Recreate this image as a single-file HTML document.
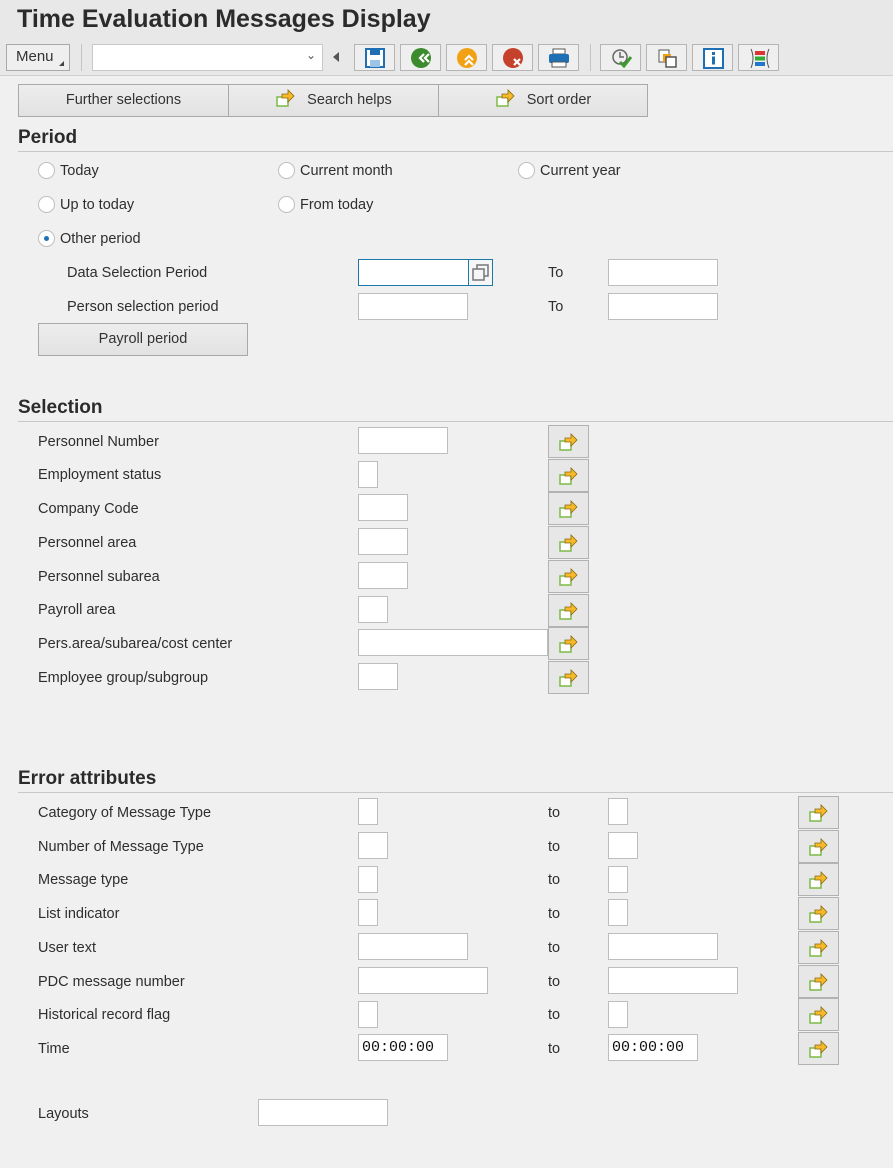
<!DOCTYPE html>
<html><head><meta charset="utf-8">
<style>
*{box-sizing:border-box;margin:0;padding:0}
body{width:893px;height:1168px;background:#f0f0f0;font-family:"Liberation Sans",Arial,sans-serif;color:#2e2e2e;font-size:14.5px;position:relative;overflow:hidden}
.a{position:absolute}
.hdr{left:0;top:0;width:893px;height:76px;background:#e8e8e8;border-bottom:1px solid #cfcfcf}
.title{left:17px;top:5px;font-size:25px;font-weight:bold;color:#2b2b2b}
.tb{top:44px;height:27px;border:1px solid #b5b5b5;background:#efefef;width:41px}
.inp{background:#fff;border:1px solid #bdbdbd;height:27px}
.btn{background:linear-gradient(#ededed,#e2e2e2);border:1px solid #a9a9a9;text-align:center;line-height:30px;color:#333}
.sec{left:18px;font-size:19px;font-weight:bold;color:#2b2b2b}
.line{left:18px;width:875px;height:1px;background:#c8c8c8}
.lbl{line-height:18px}
.rad{width:17px;height:17px;border-radius:50%;border:1.5px solid #bfbfbf;background:#fff}
.rb{width:41px;height:33px;border:1px solid #b2b2b2;background:#e7e7e7}
.rb svg{position:absolute;left:9px;top:6px}
.mono{font-family:"Liberation Mono",monospace;font-size:15px;padding-left:3px;line-height:25px;color:#111}
</style></head><body>
<div class="a hdr"></div>
<div class="a title">Time Evaluation Messages Display</div>
<div class="a btn" style="left:6px;top:44px;width:64px;height:27px;line-height:24px;background:#efefef;font-size:15px;text-align:left;padding-left:9px">Menu<span style="position:absolute;right:5px;bottom:4px;width:0;height:0;border-left:5px solid transparent;border-bottom:5px solid #444"></span></div>
<div class="a" style="left:81px;top:44px;width:1px;height:27px;background:#c4c4c4"></div>
<div class="a inp" style="left:92px;top:44px;width:231px;height:27px;border-color:#c8c8c8"><span style="position:absolute;right:6px;top:3px;font-size:12px;color:#555">&#8964;</span></div>
<div class="a" style="left:333px;top:52px;width:0;height:0;border-top:5px solid transparent;border-bottom:5px solid transparent;border-right:6px solid #555"></div>
<div class="a tb" style="left:354px"><svg class="a" style="left:10px;top:3px" width="20" height="20"><rect x="1" y="1" width="18" height="18" fill="#fff" stroke="#1f6fb5" stroke-width="2"/><rect x="5" y="1" width="10" height="6" fill="#1f6fb5"/><rect x="5" y="12" width="10" height="7" fill="#9cc4e8"/></svg></div>
<div class="a tb" style="left:400px"><svg class="a" style="left:10px;top:3px" width="21" height="21"><circle cx="10" cy="10" r="10" fill="#3d8b2f"/><path d="M13 6l-4 4 4 4M18 6l-4 4 4 4" stroke="#fff" stroke-width="2.2" fill="none"/></svg></div>
<div class="a tb" style="left:446px"><svg class="a" style="left:10px;top:3px" width="21" height="21"><circle cx="10" cy="10" r="10" fill="#f2a114"/><path d="M8 12l4-4 4 4M8 17l4-4 4 4" stroke="#fff" stroke-width="2.2" fill="none"/></svg></div>
<div class="a tb" style="left:492px"><svg class="a" style="left:10px;top:3px" width="21" height="21"><circle cx="10" cy="10" r="10" fill="#c6412b"/><path d="M11 11l6 6M17 11l-6 6" stroke="#fff" stroke-width="2.2"/></svg></div>
<div class="a tb" style="left:538px"><svg class="a" style="left:9px;top:3px" width="22" height="20"><rect x="5" y="1" width="12" height="5" fill="#fff" stroke="#555"/><rect x="1" y="6" width="20" height="9" rx="2" fill="#1f6fb5"/><rect x="4" y="14" width="14" height="5" fill="#fff" stroke="#555"/></svg></div>
<div class="a" style="left:590px;top:44px;width:1px;height:27px;background:#c4c4c4"></div>
<div class="a tb" style="left:600px"><svg class="a" style="left:10px;top:3px" width="22" height="21"><circle cx="9" cy="9" r="7" fill="none" stroke="#666" stroke-width="1.5"/><path d="M9 4v5h4" stroke="#666" stroke-width="1.5" fill="none"/><path d="M9 14l4 4 7-9" stroke="#3d9b2f" stroke-width="3" fill="none"/></svg></div>
<div class="a tb" style="left:646px"><svg class="a" style="left:10px;top:3px" width="22" height="21"><rect x="2" y="2" width="10" height="12" fill="#fff" stroke="#555"/><rect x="6" y="6" width="8" height="8" fill="#f2a114"/><rect x="9" y="9" width="10" height="10" fill="#fff" stroke="#555" stroke-width="1.5"/></svg></div>
<div class="a tb" style="left:692px"><svg class="a" style="left:10px;top:3px" width="21" height="21"><rect x="1" y="1" width="19" height="19" fill="#fff" stroke="#1f6fb5" stroke-width="2"/><rect x="9" y="4" width="3" height="3" fill="#1f6fb5"/><rect x="9" y="8.5" width="3" height="8" fill="#1f6fb5"/></svg></div>
<div class="a tb" style="left:738px"><svg class="a" style="left:10px;top:3px" width="22" height="21"><path d="M2 1q4 9 0 19M20 1q-4 9 0 19" stroke="#555" fill="none"/><rect x="6" y="3" width="10" height="4" fill="#d33"/><rect x="6" y="8.5" width="10" height="4" fill="#3a3"/><rect x="6" y="14" width="10" height="4" fill="#27c"/></svg></div>

<div class="a btn" style="left:18px;top:84px;width:211px;height:33px">Further selections</div>
<div class="a btn" style="left:228px;top:84px;width:211px;height:33px"><svg style="vertical-align:-4px;margin-right:12px" width="20" height="20"><rect x="2" y="9" width="11" height="9" fill="#fff" stroke="#7dba46" stroke-width="1.5"/><path d="M7 6h6V2l6 6-6 6v-4H7z" fill="#f5b929" stroke="#8b6a10" stroke-width="0.8"/></svg>Search helps</div>
<div class="a btn" style="left:438px;top:84px;width:210px;height:33px"><svg style="vertical-align:-4px;margin-right:12px" width="20" height="20"><rect x="2" y="9" width="11" height="9" fill="#fff" stroke="#7dba46" stroke-width="1.5"/><path d="M7 6h6V2l6 6-6 6v-4H7z" fill="#f5b929" stroke="#8b6a10" stroke-width="0.8"/></svg>Sort order</div>

<div class="a sec" style="top:127px">Period</div>
<div class="a line" style="top:151px"></div>
<div class="a rad" style="left:38px;top:162px"></div><div class="a lbl" style="left:60px;top:162px">Today</div>
<div class="a rad" style="left:278px;top:162px"></div><div class="a lbl" style="left:300px;top:162px">Current month</div>
<div class="a rad" style="left:518px;top:162px"></div><div class="a lbl" style="left:540px;top:162px">Current year</div>
<div class="a rad" style="left:38px;top:196px"></div><div class="a lbl" style="left:60px;top:196px">Up to today</div>
<div class="a rad" style="left:278px;top:196px"></div><div class="a lbl" style="left:300px;top:196px">From today</div>
<div class="a rad" style="left:38px;top:230px"><div class="a" style="left:4.5px;top:4.5px;width:5px;height:5px;border-radius:50%;background:#1f72b8"></div></div><div class="a lbl" style="left:60px;top:230px">Other period</div>
<div class="a lbl" style="left:67px;top:264px">Data Selection Period</div>
<div class="a inp" style="left:358px;top:259px;width:111px;border-color:#1b78a8"></div>
<div class="a" style="left:468px;top:259px;width:25px;height:27px;border:1px solid #1b78a8;background:#f6f6f6"><svg class="a" style="left:3px;top:4px" width="18" height="18"><rect x="1" y="5" width="11" height="11" fill="none" stroke="#777" stroke-width="1.5"/><path d="M5 5V1h11v11h-4" fill="none" stroke="#777" stroke-width="1.5"/></svg></div>
<div class="a lbl" style="left:548px;top:264px">To</div>
<div class="a inp" style="left:608px;top:259px;width:110px"></div>
<div class="a lbl" style="left:67px;top:298px">Person selection period</div>
<div class="a inp" style="left:358px;top:293px;width:110px"></div>
<div class="a lbl" style="left:548px;top:298px">To</div>
<div class="a inp" style="left:608px;top:293px;width:110px"></div>
<div class="a btn" style="left:38px;top:323px;width:210px;height:33px">Payroll period</div>

<div class="a sec" style="top:397px">Selection</div>
<div class="a line" style="top:421px"></div>

<div class="a lbl" style="left:38px;top:433px">Personnel Number</div><div class="a inp" style="left:358px;top:427px;width:90px"></div>
<div class="a lbl" style="left:38px;top:466px">Employment status</div><div class="a inp" style="left:358px;top:461px;width:20px"></div>
<div class="a lbl" style="left:38px;top:500px">Company Code</div><div class="a inp" style="left:358px;top:494px;width:50px"></div>
<div class="a lbl" style="left:38px;top:534px">Personnel area</div><div class="a inp" style="left:358px;top:528px;width:50px"></div>
<div class="a lbl" style="left:38px;top:568px">Personnel subarea</div><div class="a inp" style="left:358px;top:562px;width:50px"></div>
<div class="a lbl" style="left:38px;top:601px">Payroll area</div><div class="a inp" style="left:358px;top:596px;width:30px"></div>
<div class="a lbl" style="left:38px;top:635px">Pers.area/subarea/cost center</div><div class="a inp" style="left:358px;top:629px;width:190px"></div>
<div class="a lbl" style="left:38px;top:669px">Employee group/subgroup</div><div class="a inp" style="left:358px;top:663px;width:40px"></div>

<div class="a rb" style="left:548px;top:425px"><svg width="20" height="20"><rect x="2" y="9" width="11" height="9" fill="#fff" stroke="#7dba46" stroke-width="1.5"/><path d="M7 6h6V2l6 6-6 6v-4H7z" fill="#f5b929" stroke="#8b6a10" stroke-width="0.8"/></svg></div>
<div class="a rb" style="left:548px;top:459px"><svg width="20" height="20"><rect x="2" y="9" width="11" height="9" fill="#fff" stroke="#7dba46" stroke-width="1.5"/><path d="M7 6h6V2l6 6-6 6v-4H7z" fill="#f5b929" stroke="#8b6a10" stroke-width="0.8"/></svg></div>
<div class="a rb" style="left:548px;top:492px"><svg width="20" height="20"><rect x="2" y="9" width="11" height="9" fill="#fff" stroke="#7dba46" stroke-width="1.5"/><path d="M7 6h6V2l6 6-6 6v-4H7z" fill="#f5b929" stroke="#8b6a10" stroke-width="0.8"/></svg></div>
<div class="a rb" style="left:548px;top:526px"><svg width="20" height="20"><rect x="2" y="9" width="11" height="9" fill="#fff" stroke="#7dba46" stroke-width="1.5"/><path d="M7 6h6V2l6 6-6 6v-4H7z" fill="#f5b929" stroke="#8b6a10" stroke-width="0.8"/></svg></div>
<div class="a rb" style="left:548px;top:560px"><svg width="20" height="20"><rect x="2" y="9" width="11" height="9" fill="#fff" stroke="#7dba46" stroke-width="1.5"/><path d="M7 6h6V2l6 6-6 6v-4H7z" fill="#f5b929" stroke="#8b6a10" stroke-width="0.8"/></svg></div>
<div class="a rb" style="left:548px;top:594px"><svg width="20" height="20"><rect x="2" y="9" width="11" height="9" fill="#fff" stroke="#7dba46" stroke-width="1.5"/><path d="M7 6h6V2l6 6-6 6v-4H7z" fill="#f5b929" stroke="#8b6a10" stroke-width="0.8"/></svg></div>
<div class="a rb" style="left:548px;top:627px"><svg width="20" height="20"><rect x="2" y="9" width="11" height="9" fill="#fff" stroke="#7dba46" stroke-width="1.5"/><path d="M7 6h6V2l6 6-6 6v-4H7z" fill="#f5b929" stroke="#8b6a10" stroke-width="0.8"/></svg></div>
<div class="a rb" style="left:548px;top:661px"><svg width="20" height="20"><rect x="2" y="9" width="11" height="9" fill="#fff" stroke="#7dba46" stroke-width="1.5"/><path d="M7 6h6V2l6 6-6 6v-4H7z" fill="#f5b929" stroke="#8b6a10" stroke-width="0.8"/></svg></div>

<div class="a sec" style="top:768px">Error attributes</div>
<div class="a line" style="top:792px"></div>

<div class="a lbl" style="left:38px;top:804px">Category of Message Type</div><div class="a inp" style="left:358px;top:798px;width:20px"></div><div class="a lbl" style="left:548px;top:804px">to</div><div class="a inp" style="left:608px;top:798px;width:20px"></div>
<div class="a lbl" style="left:38px;top:838px">Number of Message Type</div><div class="a inp" style="left:358px;top:832px;width:30px"></div><div class="a lbl" style="left:548px;top:838px">to</div><div class="a inp" style="left:608px;top:832px;width:30px"></div>
<div class="a lbl" style="left:38px;top:871px">Message type</div><div class="a inp" style="left:358px;top:866px;width:20px"></div><div class="a lbl" style="left:548px;top:871px">to</div><div class="a inp" style="left:608px;top:866px;width:20px"></div>
<div class="a lbl" style="left:38px;top:905px">List indicator</div><div class="a inp" style="left:358px;top:899px;width:20px"></div><div class="a lbl" style="left:548px;top:905px">to</div><div class="a inp" style="left:608px;top:899px;width:20px"></div>
<div class="a lbl" style="left:38px;top:939px">User text</div><div class="a inp" style="left:358px;top:933px;width:110px"></div><div class="a lbl" style="left:548px;top:939px">to</div><div class="a inp" style="left:608px;top:933px;width:110px"></div>
<div class="a lbl" style="left:38px;top:973px">PDC message number</div><div class="a inp" style="left:358px;top:967px;width:130px"></div><div class="a lbl" style="left:548px;top:973px">to</div><div class="a inp" style="left:608px;top:967px;width:130px"></div>
<div class="a lbl" style="left:38px;top:1006px">Historical record flag</div><div class="a inp" style="left:358px;top:1001px;width:20px"></div><div class="a lbl" style="left:548px;top:1006px">to</div><div class="a inp" style="left:608px;top:1001px;width:20px"></div>
<div class="a lbl" style="left:38px;top:1040px">Time</div><div class="a inp mono" style="left:358px;top:1034px;width:90px">00:00:00</div><div class="a lbl" style="left:548px;top:1040px">to</div><div class="a inp mono" style="left:608px;top:1034px;width:90px">00:00:00</div>

<div class="a rb" style="left:798px;top:796px"><svg width="20" height="20"><rect x="2" y="9" width="11" height="9" fill="#fff" stroke="#7dba46" stroke-width="1.5"/><path d="M7 6h6V2l6 6-6 6v-4H7z" fill="#f5b929" stroke="#8b6a10" stroke-width="0.8"/></svg></div>
<div class="a rb" style="left:798px;top:830px"><svg width="20" height="20"><rect x="2" y="9" width="11" height="9" fill="#fff" stroke="#7dba46" stroke-width="1.5"/><path d="M7 6h6V2l6 6-6 6v-4H7z" fill="#f5b929" stroke="#8b6a10" stroke-width="0.8"/></svg></div>
<div class="a rb" style="left:798px;top:863px"><svg width="20" height="20"><rect x="2" y="9" width="11" height="9" fill="#fff" stroke="#7dba46" stroke-width="1.5"/><path d="M7 6h6V2l6 6-6 6v-4H7z" fill="#f5b929" stroke="#8b6a10" stroke-width="0.8"/></svg></div>
<div class="a rb" style="left:798px;top:897px"><svg width="20" height="20"><rect x="2" y="9" width="11" height="9" fill="#fff" stroke="#7dba46" stroke-width="1.5"/><path d="M7 6h6V2l6 6-6 6v-4H7z" fill="#f5b929" stroke="#8b6a10" stroke-width="0.8"/></svg></div>
<div class="a rb" style="left:798px;top:931px"><svg width="20" height="20"><rect x="2" y="9" width="11" height="9" fill="#fff" stroke="#7dba46" stroke-width="1.5"/><path d="M7 6h6V2l6 6-6 6v-4H7z" fill="#f5b929" stroke="#8b6a10" stroke-width="0.8"/></svg></div>
<div class="a rb" style="left:798px;top:965px"><svg width="20" height="20"><rect x="2" y="9" width="11" height="9" fill="#fff" stroke="#7dba46" stroke-width="1.5"/><path d="M7 6h6V2l6 6-6 6v-4H7z" fill="#f5b929" stroke="#8b6a10" stroke-width="0.8"/></svg></div>
<div class="a rb" style="left:798px;top:998px"><svg width="20" height="20"><rect x="2" y="9" width="11" height="9" fill="#fff" stroke="#7dba46" stroke-width="1.5"/><path d="M7 6h6V2l6 6-6 6v-4H7z" fill="#f5b929" stroke="#8b6a10" stroke-width="0.8"/></svg></div>
<div class="a rb" style="left:798px;top:1032px"><svg width="20" height="20"><rect x="2" y="9" width="11" height="9" fill="#fff" stroke="#7dba46" stroke-width="1.5"/><path d="M7 6h6V2l6 6-6 6v-4H7z" fill="#f5b929" stroke="#8b6a10" stroke-width="0.8"/></svg></div>

<div class="a lbl" style="left:38px;top:1105px">Layouts</div>
<div class="a inp" style="left:258px;top:1099px;width:130px"></div>
</body></html>
